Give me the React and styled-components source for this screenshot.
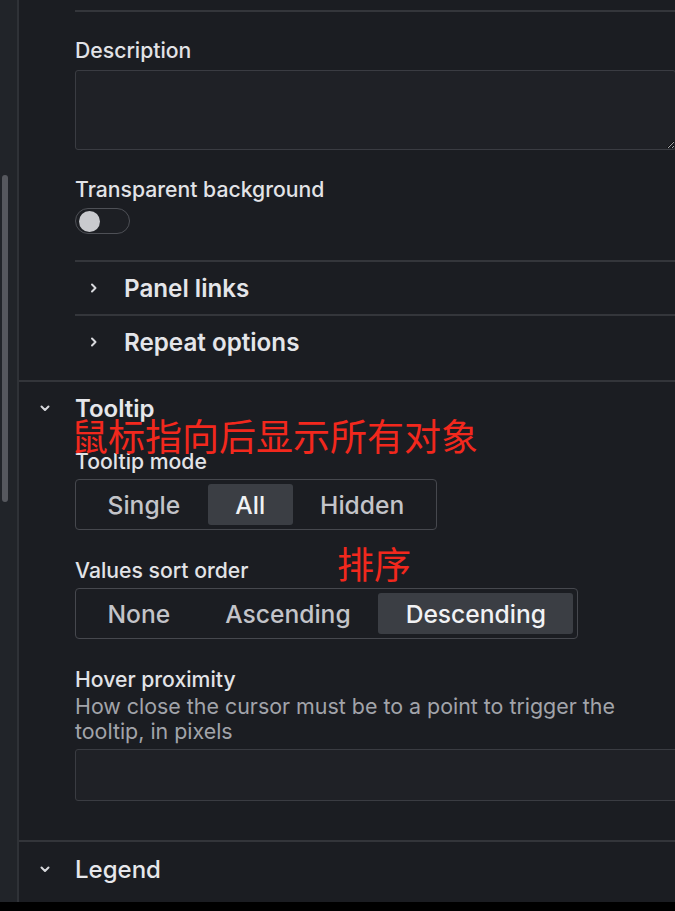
import React from "react";
import styled, { createGlobalStyle } from "styled-components";

const Global = createGlobalStyle`
  html, body { margin: 0; padding: 0; background: #000; }
  body { font-family: Inter, "Noto Sans", sans-serif; -webkit-font-smoothing: antialiased; }
  * { box-sizing: border-box; }
`;

const Page = styled.div`
  position: relative;
  display: flex;
  height: 902px;
  overflow: hidden;
  background: #1b1d22;
`;

const Sidebar = styled.div`
  width: 19px;
  flex: none;
  background: #212429;
  border-right: 2px solid #2f3237;
  padding: 175px 0 0 2px;
`;

const ScrollThumb = styled.div`
  width: 6px;
  height: 327px;
  border-radius: 3px;
  background: #56585e;
`;

const Main = styled.div`
  flex: 1;
  min-width: 0;
  display: flex;
  flex-direction: column;
`;

const Section = styled.section`
  display: flex;
  flex-direction: column;
  border-top: ${(p) => (p.$divided ? "2px solid #33353a" : "none")};
  padding-bottom: ${(p) => p.$bottom || 0}px;
`;

const Body = styled.div`
  display: flex;
  flex-direction: column;
  padding-left: 56px;
`;

const Rule = styled.div`
  height: 2px;
  background: #34363b;
  margin-top: ${(p) => p.$top || 0}px;
`;

const Label = styled.div`
  font-size: 21.2px;
  font-weight: 500;
  line-height: 24px;
  color: #e2e3e7;
  margin-top: ${(p) => p.$top || 0}px;
`;

const Hint = styled.div`
  font-size: 21.4px;
  font-weight: 400;
  line-height: 25px;
  color: #a2a4aa;
  max-width: 580px;
  margin-top: 3px;
`;

const TextArea = styled.textarea`
  display: block;
  height: 80px;
  margin: 8px -1px 0 0;
  background: #1f2126;
  border: 1px solid #3a3c42;
  border-radius: 3px;
  resize: vertical;
  color: #ddd;
  outline: none;
`;

const Input = styled.div`
  height: 52px;
  margin: 5px -4px 0 0;
  background: #1f2126;
  border: 1px solid #3a3c42;
  border-radius: 3px;
`;

const Switch = styled.div`
  width: 55px;
  height: 26px;
  margin-top: 7px;
  border: 1.5px solid #4e5056;
  border-radius: 13px;
  background: #1d1f24;
  display: flex;
  align-items: center;
  padding-left: 3px;
`;

const Knob = styled.div`
  width: 21px;
  height: 21px;
  border-radius: 50%;
  background: #c9cace;
`;

const CollapseRow = styled.div`
  height: 54px;
  margin-top: ${(p) => p.$top || 0}px;
  border-top: 2px solid #34363b;
  display: flex;
  align-items: center;
  padding-left: 14px;
  gap: 25px;
  font-size: 24.2px;
  font-weight: 600;
  color: #e4e5e9;
`;

const SectionHeader = styled.div`
  height: ${(p) => p.$h || 52}px;
  display: flex;
  align-items: center;
  padding-left: 20px;
  gap: 24px;
  font-size: 24px;
  font-weight: ${(p) => p.$weight || 600};
  color: #e6e7eb;
`;

const Radio = styled.div`
  display: inline-flex;
  align-self: flex-start;
  height: 51px;
  margin-top: 6px;
  padding: 4px;
  border: 1px solid #46484e;
  border-radius: 4px;
`;

const RadioOption = styled.div`
  display: flex;
  align-items: center;
  padding: 0 27.5px;
  border-radius: 3px;
  font-size: 24.6px;
  font-weight: 500;
  color: ${(p) => (p.$active ? "#f1f2f4" : "#c3c4c9")};
  background: ${(p) => (p.$active ? "#3b3e44" : "transparent")};
`;

const Annotation = styled.div`
  position: absolute;
  left: ${(p) => p.$x}px;
  top: ${(p) => p.$y}px;
  font-family: "Noto Sans CJK SC", sans-serif;
  font-size: 37px;
  line-height: 1;
  color: #f2281d;
  white-space: nowrap;
`;

const ChevronRight = () => (
  <svg width="10" height="14" viewBox="0 0 10 14">
    <path d="M3 3.5 L6.5 7 L3 10.5" fill="none" stroke="#d8d9dd" strokeWidth="2" strokeLinecap="round" strokeLinejoin="round" />
  </svg>
);

const ChevronDown = () => (
  <svg width="12" height="10" viewBox="0 0 12 10">
    <path d="M2.5 3.5 L6 7 L9.5 3.5" fill="none" stroke="#d8d9dd" strokeWidth="2" strokeLinecap="round" strokeLinejoin="round" />
  </svg>
);

function RadioGroup({ options, active }) {
  return (
    <Radio>
      {options.map((o) => (
        <RadioOption key={o} $active={o === active}>{o}</RadioOption>
      ))}
    </Radio>
  );
}

export default function App() {
  return (
    <>
      <Global />
      <Page>
        <Sidebar>
          <ScrollThumb />
        </Sidebar>
        <Main>
          <Section $bottom={12}>
            <Body>
              <Rule $top={10} />
              <Label $top={26}>Description</Label>
              <TextArea />
              <Label $top={27}>Transparent background</Label>
              <Switch>
                <Knob />
              </Switch>
              <CollapseRow $top={26}>
                <ChevronRight />
                Panel links
              </CollapseRow>
              <CollapseRow>
                <ChevronRight />
                Repeat options
              </CollapseRow>
            </Body>
          </Section>
          <Section $divided $bottom={39}>
            <SectionHeader>
              <ChevronDown />
              Tooltip
            </SectionHeader>
            <Body>
              <Label $top={15}>Tooltip mode</Label>
              <RadioGroup options={["Single", "All", "Hidden"]} active="All" />
              <Label $top={28}>Values sort order</Label>
              <RadioGroup options={["None", "Ascending", "Descending"]} active="Descending" />
              <Label $top={28}>Hover proximity</Label>
              <Hint>How close the cursor must be to a point to trigger the tooltip, in pixels</Hint>
              <Input />
            </Body>
          </Section>
          <Section $divided>
            <SectionHeader $h={54} $weight={500}>
              <ChevronDown />
              Legend
            </SectionHeader>
          </Section>
        </Main>
        <Annotation $x={71} $y={417}>鼠标指向后显示所有对象</Annotation>
        <Annotation $x={337} $y={545}>排序</Annotation>
      </Page>
    </>
  );
}
